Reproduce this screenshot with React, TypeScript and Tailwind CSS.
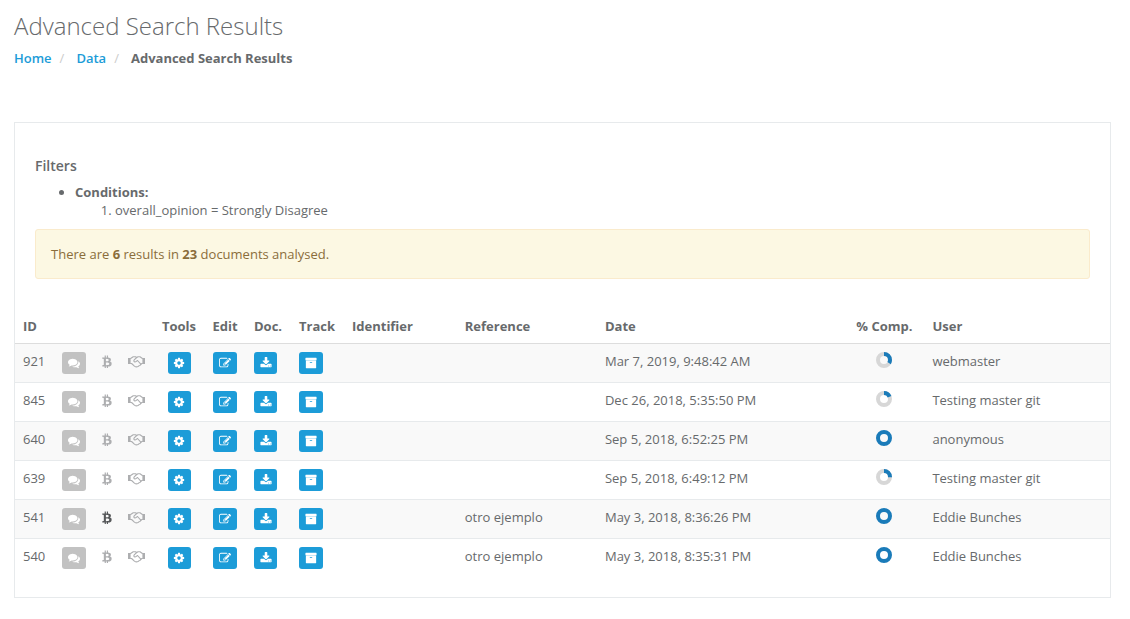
import type { ReactNode } from "react";

const icons = {
  comments:
    "M1408 768q0 139-94 257t-256.5 186.5-353.5 68.5q-86 0-176-16-124 88-278 128-36 9-86 16h-3q-11 0-20.5-8t-11.5-21q-1-3-1-6.5t.5-6.5 2-6l2.5-5 3.5-5.5 4-5 4.5-5 4-4.5q5-6 23-25t26-29.5 22.5-29 25-38.5 20.5-44q-124-72-195-177t-71-224q0-139 94-257t256.5-186.5 353.5-68.5 353.5 68.5 256.5 186.5 94 257zm384 256q0 120-71 224.5t-195 176.5q10 24 20.5 44t25 38.5 22.5 29 26 29.5 23 25q1 1 4 4.5t4.5 5 4 5 3.5 5.5l2.5 5 2 6 .5 6.5-1 6.5q-3 14-13 22t-22 7q-50-7-86-16-154-40-278-128-90 16-176 16-271 0-472-132 58 4 88 4 161 0 309-45t264-129q125-92 192-212t67-254q0-77-23-152 129 71 204 178t75 230z",
  bitcoin:
    "M1399 710q18 182-131 258 117 28 175 103t45 214q-7 71-32.5 125t-64.5 89-97 58.5-121.5 34.5-145.5 15v255h-154v-251q-80 0-122-1v252h-154v-255q-18 0-54-.5t-55-.5h-200l31-183h111q50 0 58-51v-402h16q-6-1-16-1v-287q-13-68-89-68h-111v-164l212 1q64 0 97-1v-252h154v247q82-2 122-2v-245h154v252q79 7 140 22.5t113 45 82.5 78 36.5 114.5zm-215 545q0-36-15-64t-37-46-57.5-30.5-65.5-18.5-74-9-69-3-64.5 1-47.5 1v338q8 0 37 .5t48 .5 53-1.5 58.5-4 57-8.5 55.5-14 47.5-21 39.5-30 24.5-40 9.5-51zm-71-476q0-33-12.5-58.5t-30.5-42-48-28-55-16.5-61.5-8-58-2.5-54 1-39.5.5v307q5 0 34.5.5t46.5 0 50-2 55-5.5 51.5-11 48.5-18.5 37-27 27-38.5 9-51z",
  cog: "M1152 896q0-106-75-181t-181-75-181 75-75 181 75 181 181 75 181-75 75-181zm512-109v222q0 12-8 23t-20 13l-185 28q-19 54-39 91 35 50 107 138 10 12 10 25t-9 23q-27 37-99 108t-94 71q-12 0-26-9l-138-108q-44 23-91 38-16 136-29 186-7 28-36 28h-222q-14 0-24.5-8.5t-11.5-21.5l-28-184q-49-16-90-37l-141 107q-10 9-25 9-14 0-25-11-126-114-165-168-7-10-7-23 0-12 8-23 15-21 51-66.5t54-70.5q-27-50-41-99l-183-27q-13-2-21-12.5t-8-23.5v-222q0-12 8-23t19-13l186-28q14-46 39-92-40-57-107-138-10-12-10-24 0-10 9-23 26-36 98.5-107.5t94.5-71.5q13 0 26 10l138 107q44-23 91-38 16-136 29-186 7-28 36-28h222q14 0 24.5 8.5t11.5 21.5l28 184q49 16 90 37l142-107q9-9 24-9 13 0 25 10 129 119 165 170 7 8 7 22 0 12-8 23-15 21-51 66.5t-54 70.5q26 50 41 98l183 28q13 2 21 12.5t8 23.5z",
  edit: "M888 1184l116-116-152-152-116 116v56h96v96h56zm440-720q-16-16-33 1l-350 350q-17 17-1 33t33-1l350-350q17-17 1-33zm80 594v190q0 119-84.5 203.5t-203.5 84.5h-832q-119 0-203.5-84.5t-84.5-203.5v-832q0-119 84.5-203.5t203.5-84.5h832q63 0 117 25 15 7 18 23 3 17-9 29l-49 49q-14 14-32 8-23-6-45-6h-832q-66 0-113 47t-47 113v832q0 66 47 113t113 47h832q66 0 113-47t47-113v-126q0-13 9-22l64-64q15-15 35-7t20 29zm-96-738l288 288-672 672h-288v-288zm444 132l-92 92-288-288 92-92q28-28 68-28t68 28l152 152q28 28 28 68t-28 68z",
  download:
    "M1344 1344q0-26-19-45t-45-19-45 19-19 45 19 45 45 19 45-19 19-45zm256 0q0-26-19-45t-45-19-45 19-19 45 19 45 45 19 45-19 19-45zm128-224v320q0 40-28 68t-68 28h-1472q-40 0-68-28t-28-68v-320q0-40 28-68t68-28h465l135 136q58 56 136 56t136-56l136-136h464q40 0 68 28t28 68zm-325-569q17 41-14 70l-448 448q-18 19-45 19t-45-19l-448-448q-31-29-14-70 17-39 59-39h256v-448q0-26 19-45t45-19h256q26 0 45 19t19 45v448h256q42 0 59 39z",
  archive:
    "M1088 832q0-26-19-45t-45-19h-256q-26 0-45 19t-19 45 19 45 45 19h256q26 0 45-19t19-45zm576-192v960q0 26-19 45t-45 19h-1408q-26 0-45-19t-19-45v-960q0-26 19-45t45-19h1408q26 0 45 19t19 45zm64-448v256q0 26-19 45t-45 19h-1536q-26 0-45-19t-19-45v-256q0-26 19-45t45-19h1536q26 0 45 19t19 45z",
};

type IconName = keyof typeof icons;

const documents = [
  { id: 921, paid: false, reference: "", date: "Mar 7, 2019, 9:48:42 AM", complete: 0.33, user: "webmaster" },
  { id: 845, paid: false, reference: "", date: "Dec 26, 2018, 5:35:50 PM", complete: 0.18, user: "Testing master git" },
  { id: 640, paid: false, reference: "", date: "Sep 5, 2018, 6:52:25 PM", complete: 1, user: "anonymous" },
  { id: 639, paid: false, reference: "", date: "Sep 5, 2018, 6:49:12 PM", complete: 0.25, user: "Testing master git" },
  { id: 541, paid: true, reference: "otro ejemplo", date: "May 3, 2018, 8:36:26 PM", complete: 1, user: "Eddie Bunches" },
  { id: 540, paid: false, reference: "otro ejemplo", date: "May 3, 2018, 8:35:31 PM", complete: 1, user: "Eddie Bunches" },
];

function Icon({ name, className }: { name: IconName; className: string }) {
  return (
    <svg viewBox="0 0 1792 1792" fill="currentColor" aria-hidden="true" className={className}>
      <path d={icons[name]} />
    </svg>
  );
}

function Handshake() {
  return (
    <svg
      viewBox="0 0 17 12"
      fill="none"
      stroke="currentColor"
      strokeWidth="1.1"
      strokeLinejoin="round"
      strokeLinecap="round"
      aria-hidden="true"
      className="mt-1 h-3 w-[17px] text-[#adaeb0]"
    >
      <path d="M0 2h2.6v6H0zM14.4 2H17v6h-2.6z" fill="currentColor" stroke="none" />
      <path d="M2.6 2.500 5.200.800h2.300l1.200.7 1.300-.7h2l2.400 1.700M2.600 7.500h1l2.800 2.700c.8.7 1.700.8 2.500.5 1 .2 1.800-.3 2-1 .9.1 1.600-.5 1.700-1.300.6-.1 1-.5 1-.9h.8" />
      <path d="M8.700 1.500 6.200 3.900c-.7.900-.3 2 .8 2.100 1 .1 1.600-.6 2.500-1.500l3.300 3.600" />
    </svg>
  );
}

function ActionButton({ name, label, narrow }: { name: IconName; label: string; narrow?: boolean }) {
  return (
    <button
      type="button"
      aria-label={label}
      className={`${narrow ? "w-[23px]" : "w-6"} inline-flex h-[22px] items-center justify-center rounded-[3px] bg-[#1c9cd8] align-top text-white hover:bg-[#1a8fc6]`}
    >
      <Icon name={name} className="size-3" />
    </button>
  );
}

// Ring of radius 6 and stroke 4, filled clockwise from the top
function Donut({ value }: { value: number }) {
  const length = 2 * Math.PI * 6;
  return (
    <svg viewBox="0 0 16 16" fill="none" strokeWidth="4" className="mx-auto size-4" role="img" aria-label={`${value * 100}%`}>
      {value < 1 && <circle cx="8" cy="8" r="6" stroke="#d7d7d7" />}
      <circle
        cx="8"
        cy="8"
        r="6"
        stroke="#1a7bb9"
        strokeDasharray={value < 1 ? `${length * value} ${length}` : undefined}
        transform="rotate(-90 8 8)"
      />
    </svg>
  );
}

function Th({ children, center }: { children?: ReactNode; center?: boolean }) {
  return (
    <th scope="col" className={center ? "py-2 text-center font-bold whitespace-nowrap" : "p-2 text-left font-bold whitespace-nowrap"}>
      {children}
    </th>
  );
}

export default function App() {
  return (
    <main className="min-h-screen bg-white pr-[19px] pb-5 pl-[14px] font-['Open_Sans',sans-serif] text-[13px] leading-[18px] text-[#676a6c]">
      <header className="pt-3">
        <h1 className="text-[24px] leading-7 font-light">Advanced Search Results</h1>
        <nav aria-label="Breadcrumb" className="mt-[9px]">
          <ol className="flex font-semibold">
            <li>
              <a href="#home" className="text-[#1c9cd8]">Home</a>
              <span className="px-2 font-normal text-[#cccccc]">/</span>
            </li>
            <li className="pl-1">
              <a href="#data" className="text-[#1c9cd8]">Data</a>
              <span className="px-2 font-normal text-[#cccccc]">/</span>
            </li>
            <li className="pl-1 font-bold" aria-current="page">Advanced Search Results</li>
          </ol>
        </nav>
      </header>

      <section className="mt-[55px] border border-[#e7eaec] pt-[34px] pb-5">
        <div className="px-5">
          <h2 className="text-[14px] leading-[18px] font-semibold">Filters</h2>
          <ul className="mt-2 list-disc pl-10">
            <li>
              <strong>Conditions:</strong>
              <ol className="list-decimal pl-10">
                <li>overall_opinion = Strongly Disagree</li>
              </ol>
            </li>
          </ul>
          <div className="mt-[10px] rounded-[3px] border border-[#faebcc] bg-[#fcf8e3] p-[15px] text-[#8a6d3b]">
            There are <strong>6</strong> results in <strong>23</strong> documents analysed.
          </div>
        </div>

        <table className="mt-[30px] w-full table-fixed border-separate border-spacing-0">
          <colgroup>
            <col className="w-[39px]" />
            <col className="w-10" />
            <col className="w-[26px]" />
            <col className="w-[34px]" />
            <col className="w-[50px]" />
            <col className="w-[42px]" />
            <col className="w-[45px]" />
            <col className="w-[53px]" />
            <col className="w-[10.3%]" />
            <col className="w-[12.8%]" />
            <col className="w-[22.6%]" />
            <col className="w-20" />
            <col />
          </colgroup>
          <thead className="[&_th]:border-b [&_th]:border-[#dddddd]">
            <tr>
              <Th>ID</Th>
              <Th />
              <Th />
              <Th />
              <Th center>Tools</Th>
              <Th center>Edit</Th>
              <Th>Doc.</Th>
              <Th>Track</Th>
              <Th>Identifier</Th>
              <Th>Reference</Th>
              <Th>Date</Th>
              <Th center>% Comp.</Th>
              <Th>User</Th>
            </tr>
          </thead>
          <tbody className="[&_td]:border-[#e7eaec] [&_td]:py-2 [&_td]:align-top [&_tr:not(:last-child)_td]:border-b">
            {documents.map((doc) => (
              <tr key={doc.id} className="odd:bg-[#f9f9f9]">
                <td className="px-2">{doc.id}</td>
                <td className="px-2">
                  <button
                    type="button"
                    disabled
                    aria-label="Comments"
                    className="inline-flex h-[22px] w-6 items-center justify-center rounded-[3px] bg-[#c2c2c2] align-top text-white"
                  >
                    <Icon name="comments" className="size-3" />
                  </button>
                </td>
                <td>
                  <Icon
                    name="bitcoin"
                    className={doc.paid ? "mx-auto mt-0.5 size-[14px] text-[#56585a]" : "mx-auto mt-0.5 size-[14px] text-[#adaeb0]"}
                  />
                </td>
                <td className="px-2">
                  <Handshake />
                </td>
                <td className="text-center"><ActionButton name="cog" label="Tools" narrow /></td>
                <td className="text-center"><ActionButton name="edit" label="Edit" /></td>
                <td className="px-2"><ActionButton name="download" label="Download document" narrow /></td>
                <td className="px-2"><ActionButton name="archive" label="Track" /></td>
                <td className="px-2" />
                <td className="px-2">{doc.reference}</td>
                <td className="px-2">{doc.date}</td>
                <td><Donut value={doc.complete} /></td>
                <td className="px-2">{doc.user}</td>
              </tr>
            ))}
          </tbody>
        </table>
      </section>
    </main>
  );
}
